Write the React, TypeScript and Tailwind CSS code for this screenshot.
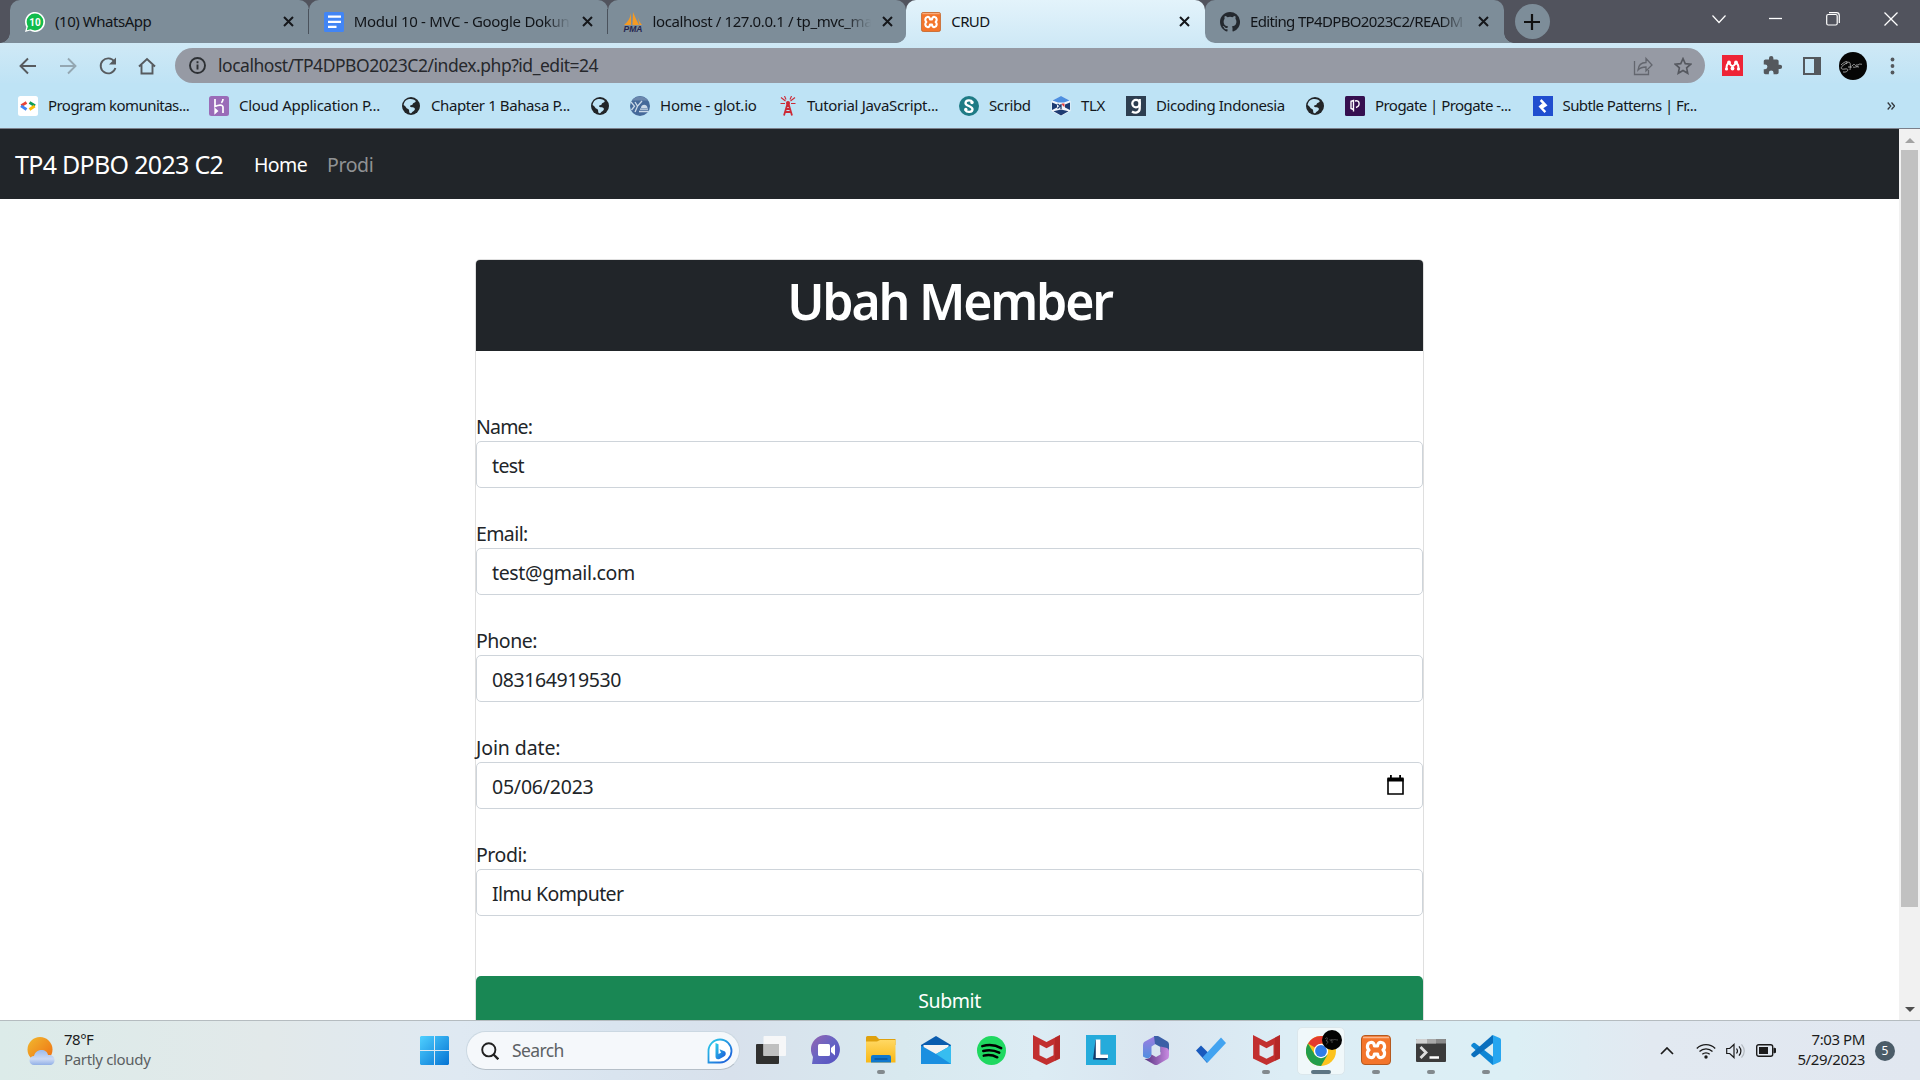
import React from "react";

type P = { children?: React.ReactNode; className?: string };

const UI = "font-['Noto_Sans','Open_Sans',sans-serif]";

/* ---------- icons ---------- */

function Svg({ w = 20, h, box, children, className = "" }: { w?: number; h?: number; box: string } & P) {
  return (
    <svg width={w} height={h ?? w} viewBox={box} fill="none" className={"shrink-0 " + className}>
      {children}
    </svg>
  );
}

const Whatsapp = () => (
  <Svg box="0 0 20 20">
    <path d="M0 20 1.4 15A10 10 0 1 1 5 18.6Z" fill="#fff" />
    <circle cx="10" cy="10" r="8.4" fill="#12bc4c" />
    <path d="M1.8 18.2 3 14l3.5 3Z" fill="#12bc4c" />
    <text x="10" y="13.6" fontSize="10" fontWeight="700" fill="#fff" textAnchor="middle" fontFamily="Roboto">10</text>
  </Svg>
);
const Docs = () => (
  <Svg box="0 0 20 20">
    <rect width="20" height="20" rx="1.5" fill="#4285f4" />
    <path d="M4 4.700h13M4 9.800h13M4 14.800h8.500" stroke="#fff" strokeWidth="2.2" />
  </Svg>
);
const Pma = () => (
  <Svg box="0 0 20 20">
    <path d="M8 1C7.400 6 5 10 1 13h7ZM10 0c2 5 4 9 6 13H9.500ZM14.500 4c1 4 2.500 7 4.500 9h-2.500Z" fill="#f59a23" />
    <text x="10" y="19.500" fontSize="8.800" fontWeight="700" fontStyle="italic" fill="#26264f" textAnchor="middle" textLength="19" lengthAdjust="spacingAndGlyphs" fontFamily="Liberation Sans">PMA</text>
  </Svg>
);
const Xampp = ({ w = 20 }: { w?: number }) => (
  <Svg w={w} box="0 0 30 30">
    <rect x=".5" y=".5" width="29" height="29" rx="3.500" fill="#f3752b" stroke="#b4591f" />
    <path d="M2 2.500h26" stroke="#f9b68c" strokeWidth="1.500" />
    <path d="M9.500 7.500C12 7 13.300 8.800 13.500 11h3c.2-2.200 1.500-4 4-3.500 3.500.7 4 5.300 1.500 7.500 2.500 2.200 2 6.800-1.500 7.500-2.500.5-3.800-1.300-4-3.500h-3c-.2 2.200-1.500 4-4 3.500C6 21.800 5.500 17.200 8 15c-2.500-2.200-2-6.800 1.500-7.500Z" stroke="#fff" strokeWidth="3.200" strokeLinejoin="round" />
  </Svg>
);
const Github = () => (
  <Svg box="0 0 16 16">
    <path fill="#24292f" d="M8 0C3.580 0 0 3.580 0 8c0 3.540 2.290 6.530 5.470 7.590.4.070.55-.17.55-.38 0-.19-.01-.82-.01-1.490-2.010.37-2.530-.49-2.690-.94-.09-.23-.48-.94-.82-1.130-.28-.15-.68-.52-.01-.53.63-.01 1.080.58 1.230.82.72 1.210 1.870.87 2.330.66.07-.52.28-.87.51-1.070-1.780-.2-3.640-.89-3.640-3.950 0-.87.31-1.590.82-2.150-.08-.2-.36-1.020.08-2.120 0 0 .67-.21 2.200.82a7.600 7.600 0 0 1 4 0c1.530-1.040 2.200-.82 2.200-.82.44 1.100.16 1.920.08 2.120.51.56.82 1.270.82 2.150 0 3.070-1.870 3.750-3.650 3.950.29.25.54.73.54 1.480 0 1.070-.01 1.930-.01 2.200 0 .21.15.46.55.38A8 8 0 0 0 8 0Z" />
  </Svg>
);
const Close = () => (
  <Svg w={11} box="0 0 11 11">
    <path d="m1 1 9 9M10 1l-9 9" stroke="#15171b" strokeWidth="2" />
  </Svg>
);
const Globe = () => (
  <Svg w={20} box="0 0 20 20">
    <circle cx="10" cy="10" r="9" fill="#222528" />
    <path d="M8 3c2 .2 5 0 6.500 1.800.8 1.400-1.200 1.700-2.300 2.400-.8.600-.2 1.400-1.400 1.800-1.300.3-2 .6-1.700 1.600.5 1 2.600.3 4 1.100 1.800 1.200.3 3-1.200 3.700-1 .5-1.300 1.900-2.600 1.900-1.500-.3-.9-2.200-1.300-3.300-.4-1.200-2-1.200-2.700-2.300C4.500 10.300 3.500 9.500 2.600 9 2.800 6 5 3.600 8 3Z" fill="#bee3f5" />
  </Svg>
);
const GDev = () => (
  <Svg box="0 0 20 20">
    <rect width="20" height="20" rx="2.500" fill="#fff" />
    <path d="M8.500 6.500 3.300 9.600" stroke="#ea4335" strokeWidth="2.800" />
    <path d="m3 9.800 5.500 3.700" stroke="#4285f4" strokeWidth="2.800" />
    <path d="m11.500 6.500 5.500 3.300" stroke="#0f9d58" strokeWidth="2.800" />
    <path d="m11.500 13.500 5.200-3.500" stroke="#fbbc04" strokeWidth="2.800" />
  </Svg>
);
const Heroku = () => (
  <Svg box="0 0 20 20">
    <rect width="20" height="20" rx="2.500" fill="#9a6cb8" />
    <path d="M6 3v7.500c3-1.300 8-2.500 8 .8V17M14 3c0 1.600-.6 2.800-1.600 3.800M6.200 13.200v3.600l2-1.800Z" stroke="#fff" strokeWidth="1.700" />
  </Svg>
);
const Glot = () => (
  <Svg box="0 0 20 20">
    <circle cx="10" cy="10" r="10" fill="#45699a" />
    <path d="M2 4.500a10 10 0 0 1 16 0Z" fill="#6b87ad" />
    <path d="m1 6 3.500 4.200L1.500 14M5 6l2.500 4.200L12 5M7.500 10.200 5 16M9 15.500h9.500M10 13.200h8" stroke="#cbd9e8" strokeWidth="1.300" />
    <path d="M11 12c0-4 6-4.500 6.500 0Z" fill="#cbd9e8" />
  </Svg>
);
const Tower = () => (
  <Svg w={18} h={20} box="0 0 18 20">
    <path d="M9 6 5 19.500M9 6l4 13.500M7 13h4M6.200 16h5.600M7.600 10h2.800" stroke="#cc2936" strokeWidth="1.800" />
    <path d="M7 3.500 5.500 0M6.500 5 2 1.500M6 7.500H1.500M11 3.500 12.500 0M11.500 5 16 1.500M12 7.500h4.500" stroke="#cc2936" strokeWidth="1.100" />
    <circle cx="9" cy="7" r="2" fill="#cc2936" />
  </Svg>
);
const Scribd = () => (
  <Svg box="0 0 20 20">
    <circle cx="10" cy="10" r="10" fill="#1e7b85" />
    <path d="M13.500 6.200C12 3.500 6.800 3.800 6.500 7c-.2 3.300 7 2.800 7 6.300 0 3.200-5.500 3.600-7.300.7" stroke="#fff" strokeWidth="2.300" />
    <circle cx="13" cy="6.500" r="1.700" fill="#fff" />
    <circle cx="6.800" cy="13.500" r="1.700" fill="#fff" />
  </Svg>
);
const Tlx = () => (
  <Svg box="0 0 20 20">
    <path d="m10 0 9.500 5v10L10 20 .5 15V5Z" fill="#f3f6fb" />
    <path d="m10 0 8.500 4.500L13 6.500H7L1.500 4.500Z" fill="#4d8fe0" />
    <path d="M1 6.500 6 8.500v3L1 14ZM19 6.500l-5 2v3l5 2.500ZM10 13.500l7.500 1.800L10 19.500l-7.500-4.200Z" fill="#1d3b72" />
    <path d="m6.500 8 2.800 2-2.800 2.500M10 8v5" stroke="#1d3b72" strokeWidth="1.300" />
    <path d="M10.500 7.500h3V11l-1.500-1Z" fill="#e23b3b" />
  </Svg>
);
const Dicoding = () => (
  <Svg box="0 0 20 20">
    <rect width="20" height="20" fill="#2d3e50" />
    <circle cx="10" cy="7.600" r="3.700" stroke="#fff" strokeWidth="2.300" />
    <path d="M13.700 3v9.500c0 4.500-5 5-7.700 3" stroke="#fff" strokeWidth="2.300" />
  </Svg>
);
const Progate = () => (
  <Svg box="0 0 20 20">
    <rect width="20" height="20" rx="1.500" fill="#35104f" />
    <path d="M5.500 5.500 8.500 4.500 8.500 15.500M6 5.500v7l2.500 1M10 5c5-1.500 5.500 5 1 6.500" stroke="#fff" strokeWidth="1.400" />
  </Svg>
);
const Toptal = () => (
  <Svg box="0 0 20 20">
    <rect width="20" height="20" fill="#204ecf" />
    <path d="M8.500 3 14.500 9.500 9.800 12.500 8 10.800 10.200 8.600 6.800 5ZM11.500 17 5.500 10.500 9 7.500 12 10.500 9.800 11.800 13.200 15.200Z" fill="#fff" />
  </Svg>
);
const Mcafee = () => (
  <Svg w={27} h={30} box="0 0 27 30" className="mx-[1.5px]">
    <path d="m0 0 13.500 7L27 0v23.500L13.500 30 0 23.500Z" fill="#c22f2f" />
    <path d="m6.500 9.500 7 3.800 7-3.800v10.800l-7 3.400-7-3.400Z" fill="#dfe9f2" />
    <path d="m27 0-5 2.600V26l5-2.500Z" fill="#a82222" opacity=".5" />
  </Svg>
);

/* ---------- browser chrome ---------- */

function Tab({ icon, title, track, active = false, sep = false }: { icon: React.ReactNode; title: string; track: string; active?: boolean; sep?: boolean }) {
  return (
    <div
      className={
        "flex h-[43px] w-[298.75px] shrink-0 items-center pl-[15px] pr-[15px] " +
        (active ? "rounded-t-[10px] bg-linear-to-b from-[#e3f3fb] to-[#cfe9f6]" : "rounded-[10px] bg-[#7d8d99]") +
        (sep ? " relative after:absolute after:right-0 after:top-[9px] after:h-[25px] after:w-px after:bg-[#4a525c]" : "")
      }
    >
      {icon}
      <div
        className={
          "-mt-[2px] ml-[10px] mr-[11px] w-[218px] whitespace-nowrap text-[15px] leading-[22px] text-[#111418] " + track +
          (title.length > 20 ? " [mask-image:linear-gradient(to_right,#000_88%,transparent)]" : "")
        }
      >
        {title}
      </div>
      <Close />
    </div>
  );
}

function TabStrip() {
  return (
    <div className="flex h-[43px] bg-[#51535d]">
      <div className="h-[43px] w-[10px] bg-[radial-gradient(circle_at_0_33px,transparent_9.5px,#7d8d99_10px)] [clip-path:inset(33px_-4px_0_0)]" />
      <div className="flex bg-linear-to-b from-[#51535d] from-50% to-[#7d8d99] to-50%">
        <Tab icon={<Whatsapp />} title="(10) WhatsApp" track="tracking-[-0.46px]" sep />
        <Tab icon={<Docs />} title="Modul 10 - MVC - Google Dokun" track="tracking-[-0.3px]" sep />
        <div className="flex bg-linear-to-b from-[#51535d] from-50% to-[#cfe9f6] to-50%">
          <div className="rounded-br-[10px] bg-linear-to-b from-[#51535d] from-50% to-[#7d8d99] to-50%">
            <Tab icon={<Pma />} title="localhost / 127.0.0.1 / tp_mvc_ma" track="tracking-[-0.4px]" />
          </div>
          <Tab icon={<Xampp />} title="CRUD" track="tracking-[-0.6px]" active />
          <Tab icon={<Github />} title="Editing TP4DPBO2023C2/READM" track="tracking-[-0.65px]" />
        </div>
      </div>
      <div className="-ml-[10px] h-[43px] w-[20px] bg-[radial-gradient(circle_at_20px_33px,transparent_9.5px,#7d8d99_10px)] [clip-path:inset(33px_0_0_0)]" />
      <div className="ml-[1px] mt-1 flex size-[35px] items-center justify-center rounded-full bg-[#7d8d99]">
        <Svg w={16} box="0 0 16 16"><path d="M8 0v16M0 8h16" stroke="#111" strokeWidth="2.2" /></Svg>
      </div>
      <div className="ml-auto mr-[22px] flex h-[37px] items-center gap-[44px]">
        <Svg w={14} box="0 0 14 14" className="-mr-px"><path d="m.5 3.500 6.500 7 6.500-7" stroke="#fff" strokeWidth="1.200" /></Svg>
        <Svg w={13} box="0 0 13 13"><path d="M0 6.500h13" stroke="#fff" strokeWidth="1.300" /></Svg>
        <Svg w={14} box="0 0 14 14"><rect x=".7" y="2.500" width="10.500" height="10.500" rx="1.500" stroke="#fff" strokeWidth="1.200" /><path d="M3 .7h7.500a2.800 2.800 0 0 1 2.800 2.800V11" stroke="#fff" strokeWidth="1.200" /></Svg>
        <Svg w={14} box="0 0 14 14"><path d="m.5.500 13 13M13.500.500l-13 13" stroke="#fff" strokeWidth="1.300" /></Svg>
      </div>
    </div>
  );
}

function Toolbar() {
  return (
    <div className="flex h-[40px] items-start bg-linear-to-b from-[#cfe9f6] to-[#bfe3f5] pt-[5px]">
      <div className="flex h-[35px] w-[175px] shrink-0 items-center pl-[18px]">
        <Svg w={20} box="0 0 20 20"><path d="M18 10H3M10 2.500 2.500 10l7.500 7.500" stroke="#575b5f" strokeWidth="1.900" /></Svg>
        <Svg w={20} box="0 0 20 20" className="ml-[20px]"><path d="M2 10h15M10 2.500l7.500 7.500-7.500 7.500" stroke="#94a7b2" strokeWidth="1.900" /></Svg>
        <Svg w={20} box="0 0 20 20" className="ml-[20px]"><path d="M16.300 5.500A7.500 7.500 0 1 0 17.400 12" stroke="#575b5f" strokeWidth="1.900" /><path d="M18 1.500V8.500h-7Z" fill="#575b5f" /></Svg>
        <Svg w={20} box="0 0 20 20" className="ml-[19px]"><path d="M2 10.500 10 3l8 7.500M4.500 9v8.500h11V9" stroke="#575b5f" strokeWidth="1.900" /></Svg>
      </div>
      <div className="flex h-[35px] w-[1530px] shrink-0 items-center rounded-full bg-[#969aa4] pl-[14px] pr-[13px]">
        <Svg w={17} box="0 0 17 17"><circle cx="8.500" cy="8.500" r="7.500" stroke="#2d3034" strokeWidth="1.900" /><path d="M8.500 7.500v5M8.500 4.200v2" stroke="#2d3034" strokeWidth="1.900" /></Svg>
        <span className="-mt-[2px] ml-[12px] whitespace-nowrap text-[17.5px] leading-[24px] tracking-[-0.47px] text-[#26282c]">localhost/TP4DPBO2023C2/index.php?id_edit=24</span>
        <div className="ml-auto flex items-center gap-[21px]">
          <Svg w={20} box="0 0 20 20"><path d="M1.500 5v13.500h14V14M5 14c.5-5 3.500-7.500 8-7.500V2.500L19 9l-6 6v-4c-3.500 0-6 .8-8 3Z" stroke="#63666e" strokeWidth="1.300" /></Svg>
          <Svg w={18} box="0 0 20 20"><path d="m10 1.800 2.500 5.600 6.100.6-4.600 4.100 1.300 6L10 15l-5.300 3.100 1.300-6L1.400 8l6.100-.6Z" stroke="#55585f" strokeWidth="1.800" /></Svg>
        </div>
      </div>
      <div className="flex h-[35px] items-center pl-[17px]">
        <Svg w={21} box="0 0 21 21"><rect width="21" height="21" fill="#ee2436" /><path d="M4.500 13.500C4.500 10 5.500 8 7 8.500c1.500.5 2 2.500 3.500 2.500s2-2 3.500-2.500c1.500-.5 2.500 1.500 2.500 5" stroke="#fff" strokeWidth="2" /><circle cx="7" cy="7.500" r="1.900" fill="#fff" /><circle cx="14" cy="7.500" r="1.900" fill="#fff" /><circle cx="4.500" cy="14" r="1.600" fill="#fff" /><circle cx="10.500" cy="13.500" r="1.900" fill="#fff" /><circle cx="16.500" cy="14" r="1.600" fill="#fff" /></Svg>
        <Svg w={21} box="0 0 24 24" className="ml-[19px]"><path fill="#54585d" d="M20.500 11H19V7c0-1.100-.9-2-2-2h-4V3.500a2.500 2.500 0 0 0-5 0V5H4c-1.100 0-2 .9-2 2v3.800h1.500a2.700 2.700 0 0 1 0 5.400H2V20c0 1.100.9 2 2 2h3.800v-1.500a2.700 2.700 0 0 1 5.400 0V22H17c1.100 0 2-.9 2-2v-4h1.500a2.500 2.500 0 0 0 0-5Z" /></Svg>
        <Svg w={18} box="0 0 18 18" className="ml-[20px]"><path d="M1 1h16v16H1Z" stroke="#54585d" strokeWidth="2" /><path d="M11 1h6v16h-6Z" fill="#54585d" /></Svg>
        <Svg w={28} box="0 0 28 28" className="ml-[18px]"><circle cx="14" cy="14" r="14" fill="#050505" /><path d="M2 13c5-5 9-4 4-1s-5 6 0 5 3 4-2 3M7 12c4-4 5-1 4 6m-2-3h4m0-1c2-3 3-1 4 0m1-2v3m1-2c2-2 3 0 4-1m-9 3c2 1 3-1 6 0" stroke="#d5d5d5" strokeWidth=".7" /></Svg>
        <Svg w={5} h={20} box="0 0 5 20" className="ml-[23px]"><circle cx="2.500" cy="3.500" r="1.900" fill="#54585d" /><circle cx="2.500" cy="10" r="1.900" fill="#54585d" /><circle cx="2.500" cy="16.500" r="1.900" fill="#54585d" /></Svg>
      </div>
    </div>
  );
}

function Mark({ icon, text, w, track }: { icon: React.ReactNode; text: string; w: string; track: string }) {
  return (
    <div className={"flex shrink-0 items-center gap-[10px] whitespace-nowrap " + w + " " + track}>
      {icon}
      <span className="-mt-[2px]">{text}</span>
    </div>
  );
}

function Bookmarks() {
  return (
    <div className="flex h-[45px] items-center bg-[#bee3f5] pl-[18px] text-[15px] leading-[22px] text-[#14181c]">
      <Mark w="w-[191px]" track="tracking-[-0.55px]" icon={<GDev />} text="Program komunitas..." />
      <Mark w="w-[192px]" track="tracking-[-0.27px]" icon={<Heroku />} text="Cloud Application P..." />
      <Mark w="w-[189px]" track="tracking-[-0.4px]" icon={<Globe />} text="Chapter 1 Bahasa P..." />
      <Mark w="w-[40px]" track="tracking-normal" icon={<Globe />} text="" />
      <Mark w="w-[149px]" track="tracking-[-0.23px]" icon={<Glot />} text="Home - glot.io" />
      <Mark w="w-[180px]" track="tracking-[-0.32px]" icon={<Tower />} text="Tutorial JavaScript..." />
      <Mark w="w-[92px]" track="tracking-[-0.4px]" icon={<Scribd />} text="Scribd" />
      <Mark w="w-[75px]" track="tracking-[-0.4px]" icon={<Tlx />} text="TLX" />
      <Mark w="w-[179px]" track="tracking-[-0.43px]" icon={<Dicoding />} text="Dicoding Indonesia" />
      <Mark w="w-[40px]" track="tracking-normal" icon={<Globe />} text="" />
      <Mark w="w-[187.5px]" track="tracking-[-0.55px]" icon={<Progate />} text="Progate | Progate -..." />
      <Mark w="w-[180px]" track="tracking-[-0.58px]" icon={<Toptal />} text="Subtle Patterns | Fr..." />
      <Svg w={8} box="0 0 8 8" className="ml-auto mr-[25px]"><path d="m.7.500 3 3.500-3 3.500M4.500.500l3 3.500-3 3.500" stroke="#33383d" strokeWidth="1.300" /></Svg>
    </div>
  );
}

/* ---------- page ---------- */

const fields = [
  { label: "Name:", value: "test", lt: "tracking-[-0.8px]", vt: "tracking-[-0.6px]" },
  { label: "Email:", value: "test@gmail.com", lt: "tracking-[-0.6px]", vt: "tracking-[-0.35px]" },
  { label: "Phone:", value: "083164919530", lt: "tracking-[-0.5px]", vt: "tracking-[-0.4px]" },
  { label: "Join date:", value: "05/06/2023", lt: "tracking-[-0.1px]", vt: "tracking-[-0.22px]", date: true },
  { label: "Prodi:", value: "Ilmu Komputer", lt: "tracking-[-0.45px]", vt: "tracking-[-0.6px]" },
];

function Page() {
  return (
    <div className="h-[891px] w-[1899px] overflow-hidden bg-white text-[19.5px] leading-[30px] text-[#212529]">
      <nav className="flex h-[70px] items-center bg-[#212529] pl-[15px] text-white">
        <span className="w-[239px] whitespace-nowrap text-[25px] tracking-[-0.7px]">TP4 DPBO 2023 C2</span>
        <span className="mt-[2px] w-[73px] tracking-[-0.6px]">Home</span>
        <span className="mt-[2px] tracking-[-0.4px] text-[#909294]">Prodi</span>
      </nav>
      <div className="ml-[475px] mt-[60px] w-[949px] rounded-[5px] border border-[#dfdfdf]">
        <div className="flex h-[91px] items-start justify-center rounded-t-[4px] bg-[#212529] pt-[11px] text-[50px] leading-[60px] font-semibold tracking-[-2.2px] text-white">Ubah Member</div>
        <div className="flex flex-col gap-[30px] pt-[60px]">
          {fields.map((f) => (
            <div key={f.label}>
              <div className={"h-[30px] pt-px " + f.lt}>{f.label}</div>
              <div className={"flex h-[47px] items-center justify-between rounded-[5px] border border-[#ced4da] pl-[15px] pr-[18px] " + f.vt}>
                <span className="mt-[2px]">{f.value}</span>
                {f.date && (
                  <Svg w={17} h={21} box="0 0 17 21"><path d="M1 4v15h15V4Z" stroke="#000" strokeWidth="1.600" /><path d="M.5 2.500h16v4H.5ZM3 0h1.800v3H3ZM12.200 0H14v3h-1.800Z" fill="#000" /></Svg>
                )}
              </div>
            </div>
          ))}
        </div>
        <div className="mt-[60px] flex h-[50px] items-center justify-center rounded-[5px] bg-[#198754] tracking-[-0.4px] text-white">Submit</div>
      </div>
    </div>
  );
}

function Scrollbar() {
  return (
    <div className="flex h-[891px] w-[21px] flex-col items-center bg-[#f1f1f1]">
      <Svg w={10} h={21} box="0 0 10 21"><path d="m0 14 5-5 5 5Z" fill="#a3a3a3" /></Svg>
      <div className="h-[757px] w-[17px] bg-[#c1c1c1]" />
      <Svg w={10} h={21} box="0 0 10 21" className="mt-auto"><path d="m0 8 5 5 5-5Z" fill="#505050" /></Svg>
    </div>
  );
}

/* ---------- taskbar ---------- */

function TaskItem({ children, run = "" }: P & { run?: "" | "dot" | "active" }) {
  return (
    <div className={"relative flex h-[48px] w-[48px] shrink-0 items-center justify-center pb-[1px] " + (run === "active" ? "rounded-[5px] border border-[#dbe7ec] bg-[#f0f8fa]" : "")}>
      {children}
      {run === "dot" && <div className="absolute bottom-[1px] left-5 h-1 w-2 rounded-full bg-[#82898d]" />}
      {run === "active" && <div className="absolute bottom-0 left-[13px] h-1 w-5 rounded-full bg-[#5d7583]" />}
    </div>
  );
}

function Taskbar() {
  return (
    <div className="flex h-[60px] items-center border-t border-[#b5bcc0] bg-[linear-gradient(90deg,#dcebe9_0%,#e2e9ea_14%,#dfe9f2_24%,#d9e4ef_32%,#d8e1ec_38%,#d8e9ef_47%,#dcecf4_54%,#d9e5f0_60%,#dcedf5_67%,#dceff5_79%,#e2e9f1_86%,#e1e7f0_100%)]">
      <div className="flex w-[420px] items-center pl-[27px]">
        <Svg w={28} box="0 0 28 28">
          <defs>
            <linearGradient id="sun" x1="0" y1="0" x2="1" y2="1"><stop stopColor="#f1b92f" /><stop offset="1" stopColor="#ef6c11" /></linearGradient>
            <linearGradient id="cloud" x1="0" y1="0" x2="0" y2="1"><stop stopColor="#9dbbec" /><stop offset=".6" stopColor="#ccdaf5" /><stop offset="1" stopColor="#92b0e6" /></linearGradient>
          </defs>
          <circle cx="13" cy="12.500" r="12.500" fill="url(#sun)" />
          <path d="M7 28a4.500 4.500 0 0 1 0-9c1-3.500 3.500-6 7.500-6 3.500 0 6 2 6.500 5 3.500-.5 6.500 1.500 6.500 5s-2 5-4.500 5Z" fill="url(#cloud)" />
        </Svg>
        <div className="-mt-[4px] ml-[9px] text-[15px] leading-[20px]">
          <div className="tracking-[-0.5px] text-[#1c1c1c]">78°F</div>
          <div className="tracking-[-0.33px] text-[#5b6062]">Partly cloudy</div>
        </div>
      </div>
      <Svg w={29} box="0 0 29 29">
        <defs><linearGradient id="win" x1="0" y1="0" x2="1" y2="1" gradientUnits="objectBoundingBox"><stop stopColor="#4fd0ff" /><stop offset="1" stopColor="#0573d3" /></linearGradient></defs>
        <path d="M1 0h13v14H0V1Zm14 0h13l1 1v13H15ZM0 15h14v14H1l-1-1Zm15 0h14v13l-1 1H15Z" fill="url(#win)" />
      </Svg>
      <div className="ml-[17px] flex h-[39px] w-[274px] items-center rounded-full border border-[#cbd8e2] border-b-[#b5bfc8] bg-[#f5f8fb] pl-[14px] pr-[6px]">
        <Svg w={18} box="0 0 18 18"><circle cx="7.800" cy="7.800" r="6.600" stroke="#202020" strokeWidth="1.900" /><path d="m12.300 12.300 5 5" stroke="#202020" strokeWidth="2.300" /></Svg>
        <span className="-mt-[2px] ml-[13px] text-[17.5px] leading-[24px] tracking-[-0.6px] text-[#5d6164]">Search</span>
        <Svg w={26} box="0 0 26 26" className="ml-auto">
          <defs><linearGradient id="bing" x1="0" y1="0" x2="1" y2="1"><stop stopColor="#2ccfe9" /><stop offset="1" stopColor="#1b55d9" /></linearGradient></defs>
          <path d="M1.500 24.500V13A11.500 11.500 0 1 1 13 24.500Z" stroke="url(#bing)" strokeWidth="1.800" fill="#fff" />
          <path d="M8.500 5 11.500 6.200V16l2.500-1.300-1.500-3.500 5 2c2 1.300 1.500 4.300-.5 5.300l-4.500 2.500c-2.500 1-4-.5-4-2.500Z" fill="url(#bing)" />
        </Svg>
      </div>
      <div className="ml-[7px] flex gap-[7px]">
        <TaskItem>
          <Svg w={30} h={28} box="0 0 30 28"><rect y="8" width="23" height="20" rx="1" fill="#30302f" /><rect x="7.500" width="22.500" height="20" rx="1" fill="#f6f7f8" /><path d="M7.500 8H23v12H7.500Z" fill="#bfc0c0" /></Svg>
        </TaskItem>
        <TaskItem>
          <Svg w={30} box="0 0 30 30">
            <defs><linearGradient id="chat" x1="0" y1="0" x2="1" y2="1"><stop stopColor="#9765b0" /><stop offset=".5" stopColor="#6664c4" /><stop offset="1" stopColor="#544fc0" /></linearGradient></defs>
            <path d="M1 29 2 22A14.500 14.500 0 1 1 15 29Z" fill="url(#chat)" /><rect x="7" y="9" width="12" height="12" rx="1.500" fill="#fff" /><path d="m20 13 4-3.500v11L20 17Z" fill="#fff" />
          </Svg>
        </TaskItem>
        <TaskItem run="dot">
          <Svg w={30} h={28} box="0 0 30 28">
            <defs><linearGradient id="fold" x1="0" y1="0" x2="0" y2="1"><stop stopColor="#ffd863" /><stop offset="1" stopColor="#f9b815" /></linearGradient></defs>
            <path d="M0 1.500Q0 0 1.500 0H10l3 3h16.500v6H0Z" fill="#dfa10d" /><path d="M0 5.500h11L14 4h15.500v22.500H0Z" fill="url(#fold)" /><path d="M5 26.500V21q0-2 2-2h16q2 0 2 2v5.500Z" fill="#0f78cd" /><path d="M8.500 23h13" stroke="#084c8c" strokeWidth="1.200" />
          </Svg>
        </TaskItem>
        <TaskItem>
          <Svg w={30} h={28} box="0 0 30 28">
            <path d="M15 0 30 9v18.500H0V9Z" fill="#0a5cae" /><path d="M2.500 9h25v10h-25Z" fill="#f3f3f3" /><path d="M0 9.500 15 18 30 9.500V28H0Z" fill="#1a8fe0" /><path d="M15 18 30 9.500V28Z" fill="#37bdf0" />
          </Svg>
        </TaskItem>
        <TaskItem>
          <Svg w={29} box="0 0 30 30"><circle cx="15" cy="15" r="15" fill="#1fd860" /><path d="M5.500 10.500c7-2 14-1 19.500 2M6.500 15.500c6-1.600 11.500-.8 16.500 1.800M7 20.300c5-1.300 9.500-.7 14 1.700" stroke="#000" strokeWidth="2.600" strokeLinecap="round" /></Svg>
        </TaskItem>
        <TaskItem><Mcafee /></TaskItem>
        <TaskItem>
          <Svg w={30} box="0 0 30 30"><rect width="30" height="30" fill="#25abdb" /><path d="M7 24.500 9.500 5h5v14.500H22L21 25Z" fill="#123a6b" /><path d="M9.800 4.500h4.700v15H22V23H9.800Z" fill="#fff" /></Svg>
        </TaskItem>
        <TaskItem>
          <Svg w={26} h={29} box="0 0 26 29">
            <defs><linearGradient id="m1" x1="0" y1="0" x2="0" y2="1"><stop stopColor="#a07be0" /><stop offset="1" stopColor="#4f8fe0" /></linearGradient><linearGradient id="m2" x1="0" y1="0" x2="1" y2="0"><stop stopColor="#55327e" /><stop offset="1" stopColor="#c98be2" /></linearGradient></defs>
            <path d="M12 0 1.500 5.800Q0 6.700 0 9v11.500q6 4 8.500-1.500V10.500L17 5Z" fill="url(#m1)" />
            <path d="M11 0q3-.8 5 .5l8.500 5Q26 6.500 26 8.500V17l-8.500-1v-5L12 8Z" fill="#3b5fa6" />
            <path d="M17.500 10.500 24 12q2 1 2 3v4.500q0 2.500-1.500 3.500L15 28.500q-2 1-4 0L1.500 23Q8 23 8.500 18.500L13 21l4.500-2.500Z" fill="url(#m2)" />
          </Svg>
        </TaskItem>
        <TaskItem>
          <Svg w={30} h={30} box="0 0 30 30"><path d="M0 15.500 5 10.500l9 9-3 8.500Z" fill="#195abd" /><path d="m6.500 22.500 5 5.300L30 8 25 2.500Z" fill="#42a3f0" /></Svg>
        </TaskItem>
        <TaskItem run="dot"><Mcafee /></TaskItem>
        <TaskItem run="active">
          <Svg w={36} h={38} box="0 0 36 38" className="-mt-[5px] ml-[6px]">
            <circle cx="15" cy="22" r="15" fill="#fcc31e" />
            <path d="M15 22 2 14.500A15 15 0 0 1 28 14.500H15Z" fill="#e33b2e" />
            <path d="M2 14.500A15 15 0 0 0 15 37l6.500-11.300L9 26Z" fill="#229e4b" />
            <circle cx="15" cy="22" r="7.200" fill="#fff" /><circle cx="15" cy="22" r="5.900" fill="#2f7de9" />
            <circle cx="26" cy="11" r="10" fill="#030303" /><path d="M19 10c3-3 3 0 1 2 3-1 2 3 0 3m4-5c0 3 2 2 2 0v4m1-3c2-1 3 0 5 0" stroke="#666" strokeWidth=".7" />
          </Svg>
        </TaskItem>
        <TaskItem run="dot"><Xampp w={30} /></TaskItem>
        <TaskItem run="dot">
          <Svg w={30} h={23} box="0 0 30 23"><rect width="30" height="23" rx="1" fill="#3b3b3b" /><path d="M0 4.500V1q0-1 1-1h28q1 0 1 1v3.500Z" fill="#8a8a8a" /><path d="M0 1q0-1 1-1h10v4.500H0Z" fill="#d0d0d0" /><path d="M11 0h9v4.500h-9Z" fill="#a9a9a9" /><path d="m4.500 8 5.500 5.500L4.500 19" stroke="#ddd" strokeWidth="2.800" /><path d="M13.500 18.500H23" stroke="#fff" strokeWidth="2.500" /></Svg>
        </TaskItem>
        <TaskItem run="dot">
          <Svg w={30} box="0 0 30 30"><path d="M22 30v-8.200L4 8Q3 7.500 2.200 8L.6 9.500q-.8 1 0 2L21 29.500Z" fill="#0e86d4" /><path d="M22 0v8.200L4 22q-1 .5-1.800 0L.6 20.500q-.8-1 0-2L21 .5Z" fill="#0a6fbd" /><path d="M21 .2q.6-.4 1.300 0L28.700 3Q30 3.700 30 5v20q0 1.300-1.300 2l-6.400 2.800q-.7.400-1.300 0 1 0 1-1V1.200q0-1-1-1Z" fill="#27a6f0" /></Svg>
        </TaskItem>
      </div>
      <div className="ml-auto flex items-center">
        <Svg w={14} h={8} box="0 0 14 8"><path d="m1 7 6-6 6 6" stroke="#1b1b1b" strokeWidth="1.700" /></Svg>
        <Svg w={20} h={16} box="0 0 20 16" className="ml-[22px]"><path d="M.8 5.500a13 13 0 0 1 18.400 0M3.500 8.500a9.200 9.200 0 0 1 13 0M6.300 11.300a5.300 5.300 0 0 1 7.400 0" stroke="#1b1b1b" strokeWidth="1.300" /><circle cx="10" cy="14" r="1.700" fill="#1b1b1b" /></Svg>
        <Svg w={20} h={16} box="0 0 20 16" className="ml-[10px]"><path d="M.7 5.500v5h3L8 14.500v-13L3.700 5.500Z" stroke="#1b1b1b" strokeWidth="1.200" /><path d="M10.500 5.500q2 2.500 0 5M13 3.300q3.800 4.700 0 9.400" stroke="#1b1b1b" strokeWidth="1.200" /><path d="M15.500 1.300q5.500 6.700 0 13.400" stroke="#b4bac0" strokeWidth="1.200" /></Svg>
        <Svg w={20} h={13} box="0 0 20 13" className="ml-[10px]"><rect x=".7" y=".7" width="16" height="11.600" rx="2" stroke="#1b1b1b" strokeWidth="1.400" /><rect x="3" y="3" width="9" height="7" fill="#1b1b1b" /><path d="M18 4v5l2-1V5Z" fill="#1b1b1b" stroke="#1b1b1b" /></Svg>
        <div className="-mt-[4px] ml-[20px] w-[69px] whitespace-nowrap text-right text-[15px] leading-[20px] tracking-[-0.4px] text-[#1c1c1c]">
          <div>7:03 PM</div>
          <div>5/29/2023</div>
        </div>
        <div className="ml-[10px] mr-[25px] flex size-5 items-center justify-center rounded-full bg-[#4b5c68] text-[12px] leading-none text-white">5</div>
      </div>
    </div>
  );
}

export default function App() {
  return (
    <div className={"flex h-[1080px] w-[1920px] flex-col overflow-hidden " + UI}>
      <TabStrip />
      <Toolbar />
      <Bookmarks />
      <div className="h-px bg-[#7b7f8a]" />
      <div className="flex h-[891px]">
        <Page />
        <Scrollbar />
      </div>
      <Taskbar />
    </div>
  );
}
